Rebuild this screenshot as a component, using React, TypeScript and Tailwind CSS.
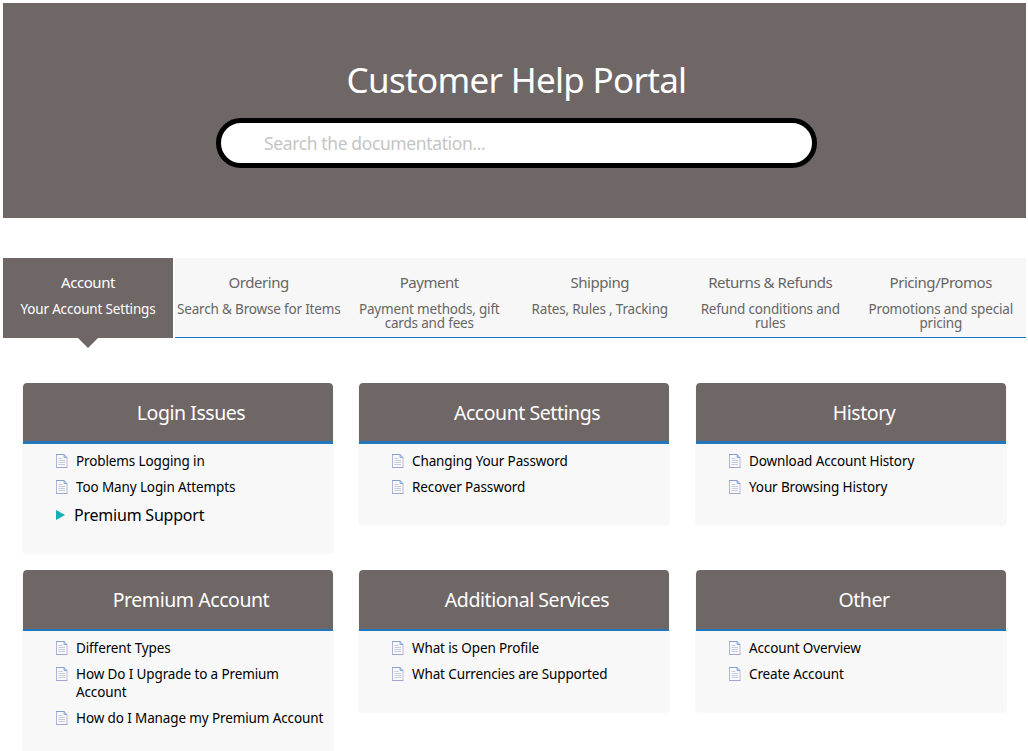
type Item = { text: string; folder?: boolean };
type Section = { title: string; items: Item[] };

const tabs = [
  { title: "Account", text: "Your Account Settings" },
  { title: "Ordering", text: "Search & Browse for Items" },
  { title: "Payment", text: "Payment methods, gift\ncards and fees" },
  { title: "Shipping", text: "Rates, Rules , Tracking" },
  { title: "Returns & Refunds", text: "Refund conditions and\nrules" },
  { title: "Pricing/Promos", text: "Promotions and special\npricing" },
];

const topRow: Section[] = [
  {
    title: "Login Issues",
    items: [
      { text: "Problems Logging in" },
      { text: "Too Many Login Attempts" },
      { text: "Premium Support", folder: true },
    ],
  },
  {
    title: "Account Settings",
    items: [{ text: "Changing Your Password" }, { text: "Recover Password" }],
  },
  {
    title: "History",
    items: [{ text: "Download Account History" }, { text: "Your Browsing History" }],
  },
];

const bottomRow: Section[] = [
  {
    title: "Premium Account",
    items: [
      { text: "Different Types" },
      { text: "How Do I Upgrade to a Premium\nAccount" },
      { text: "How do I Manage my Premium Account" },
    ],
  },
  {
    title: "Additional Services",
    items: [{ text: "What is Open Profile" }, { text: "What Currencies are Supported" }],
  },
  {
    title: "Other",
    items: [{ text: "Account Overview" }, { text: "Create Account" }],
  },
];

function DocIcon() {
  return (
    <svg className="mt-[2px] h-[14px] w-[12px] shrink-0" viewBox="0 0 12 14" fill="none">
      <path d="M.5.5h8l2.500 3v10H.5z" fill="#f7f9fe" />
      <path d="M.5 14V.5" stroke="#b0b4dc" />
      <path d="M11 3.500V13.500" stroke="#c3b4dc" />
      <path d="M0 13.500h11.500" stroke="#a3a4d0" />
      <path d="M0 .5h8.500" stroke="#8aa0cc" />
      <path d="M8 .5v3h3z" fill="#c9dcf4" stroke="#7d9bcb" strokeWidth=".8" />
      <path d="M2.500 4.500h4M2.500 6.500h6.500M2.500 8.500h6.500M2.500 10.500h6.500" stroke="#c5cddb" />
    </svg>
  );
}

function Card({ section, thinRule }: { section: Section; thinRule?: boolean }) {
  return (
    <section className="w-[312px] shrink-0 overflow-hidden rounded-[4px] border border-t-0 border-[#f9f9f9] bg-[#f8f8f8] pb-[29px]">
      <h2
        className={
          "flex h-[61px] items-center justify-center rounded-t-[4px] border-[#2176bc] bg-[#6f6666] pl-[26px] text-[19.5px] tracking-[-0.45px] text-white " +
          (thinRule ? "border-b-2" : "border-b-[3px] pt-[1px]")
        }
      >
        {section.title}
      </h2>
      <ul className="flex flex-col gap-2 pt-2 pl-[33px]">
        {section.items.map((item) =>
          item.folder ? (
            <li key={item.text} className="flex h-[20px] items-center pt-px text-[16px] leading-[20px] tracking-[-0.22px]">
              <svg className="h-[10px] w-[9px]" viewBox="0 0 9 10">
                <path d="M0 0l9 5-9 5z" fill="#12b0b4" />
              </svg>
              <span className="ml-[9px]">{item.text}</span>
            </li>
          ) : (
            <li key={item.text} className="flex gap-[8px] text-[13.5px] leading-[18px] tracking-[-0.12px]">
              <DocIcon />
              <span className="whitespace-pre">{item.text}</span>
            </li>
          ),
        )}
      </ul>
    </section>
  );
}

export default function App() {
  return (
    <main className="h-[751px] w-[1028px] overflow-hidden bg-white pt-[3px] pl-[3px] font-['Noto_Sans','Open_Sans',sans-serif] text-black">
      <header className="flex h-[215px] w-[1023px] flex-col items-center bg-[#6f6666] pt-[53px] pl-[4px]">
        <h1 className="text-[35px] leading-[48px] tracking-[-0.7px] text-white">Customer Help Portal</h1>
        <div className="mt-[14px] flex h-[50px] w-[601px] items-center rounded-full border-[5px] border-black bg-white pt-px pl-[43px] text-[17.5px] tracking-[-0.38px] text-[#c5c5c5]">
          <span>Search the documentation...</span>
        </div>
      </header>
      <nav className="mt-10 grid w-[1023px] grid-cols-6 bg-[#f7f7f7] text-center text-[#666]">
        {tabs.map((tab, i) => (
          <div
            key={tab.title}
            className={
              i === 0
                ? "relative mr-[0.5px] h-[80px] bg-[#6f6666] pt-[14px] text-white shadow-[2px_0_0_#fff]"
                : "h-[80px] border-b border-[#1878c8] pt-[14px]"
            }
          >
            <div className="text-[15px] leading-[20px] tracking-[-0.45px]">{tab.title}</div>
            <div className="mt-[10px] text-[13.5px] leading-[14px] tracking-[-0.18px] whitespace-pre">{tab.text}</div>
            {i === 0 && (
              <svg className="absolute top-[80px] left-[75px] h-[10px] w-[20px]" viewBox="0 0 20 10">
                <path d="M0 0h20L10 10z" fill="#6f6666" />
              </svg>
            )}
          </div>
        ))}
      </nav>
      <div className="mt-[45px] grid h-[187px] grid-cols-[355px_337px_312px] items-start pl-[0px]">
        <div className="pl-[19px]"><Card section={topRow[0]} /></div>
        <Card section={topRow[1]} />
        <Card section={topRow[2]} />
      </div>
      <div className="grid grid-cols-[355px_337px_312px] items-start">
        <div className="pl-[19px]"><Card section={bottomRow[0]} thinRule /></div>
        <Card section={bottomRow[1]} thinRule />
        <Card section={bottomRow[2]} thinRule />
      </div>
    </main>
  );
}
